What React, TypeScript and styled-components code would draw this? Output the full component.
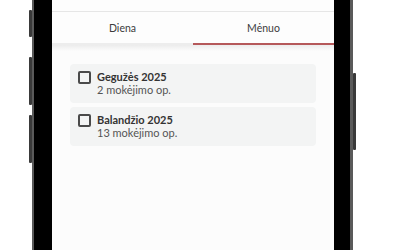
import styled, { createGlobalStyle } from 'styled-components';

const GlobalStyle = createGlobalStyle`
  html, body {
    margin: 0;
    padding: 0;
    background: #ffffff;
    font-family: Lato, 'Liberation Sans', sans-serif;
  }
`;

const months = [
  { title: 'Gegužės 2025', count: '2 mokėjimo op.' },
  { title: 'Balandžio 2025', count: '13 mokėjimo op.' },
];

export default function App() {
  return (
    <Page>
      <GlobalStyle />
      <Phone>
        <SideButton side="left" top={10} height={27} />
        <SideButton side="left" top={57} height={48} />
        <SideButton side="left" top={115} height={48} />
        <SideButton side="right" top={73} height={77} />
        <Screen>
          <TopBar />
          <Tabs>
            <Tab>Diena</Tab>
            <Tab active>Mėnuo</Tab>
          </Tabs>
          <Shadow />
          <List>
            {months.map((m) => (
              <Card key={m.title}>
                <Checkbox />
                <CardText>
                  <Title>{m.title}</Title>
                  <Sub>{m.count}</Sub>
                </CardText>
              </Card>
            ))}
          </List>
        </Screen>
      </Phone>
    </Page>
  );
}

const Page = styled.div`
  width: 400px;
  height: 250px;
  overflow: hidden;
  padding-left: 32px;
  box-sizing: border-box;
`;

const Phone = styled.div`
  position: relative;
  width: 321px;
  height: 250px;
  box-sizing: border-box;
  background: #000;
  border-left: 2px solid #5a5a5a;
  border-right: 3px solid #5a5a5a;
  padding: 0 16px 0 18px;
`;

const SideButton = styled.div<{ side: 'left' | 'right'; top: number; height: number }>`
  position: absolute;
  top: ${(p) => p.top}px;
  height: ${(p) => p.height}px;
  width: 3px;
  background: #3a3a3a;
  border-radius: 1px;
  ${(p) => (p.side === 'left' ? 'left: -5px;' : 'right: -6px;')}
`;

const Screen = styled.div`
  height: 100%;
  background: #fcfcfc;
  display: flex;
  flex-direction: column;
`;

const TopBar = styled.div`
  height: 11px;
  background: #fdfdfd;
  border-bottom: 1px solid #e6e6e6;
`;

const Tabs = styled.div`
  display: flex;
  height: 33px;
  background: #fdfdfd;
`;

const Tab = styled.div<{ active?: boolean }>`
  flex: 1;
  display: flex;
  align-items: center;
  justify-content: center;
  font-size: 10.5px;
  color: #3c3c3c;
  box-sizing: border-box;
  padding-top: 1px;
  border-bottom: 2px solid ${(p) => (p.active ? '#b5585a' : '#ededed')};
`;

const Shadow = styled.div`
  height: 6px;
  background: linear-gradient(#ececec, #fcfcfc);
`;

const List = styled.div`
  display: flex;
  flex-direction: column;
  gap: 4px;
  padding: 13px 18px 0;
`;

const Card = styled.div`
  display: flex;
  align-items: flex-start;
  gap: 6px;
  height: 39px;
  box-sizing: border-box;
  padding: 6px 8px;
  background: #f3f4f4;
  border-radius: 4px;
`;

const Checkbox = styled.div`
  width: 13px;
  height: 13px;
  box-sizing: border-box;
  border: 2px solid #4a4a4a;
  border-radius: 2px;
  flex-shrink: 0;
  margin-top: 1px;
`;

const CardText = styled.div`
  display: flex;
  flex-direction: column;
`;

const Title = styled.div`
  font-size: 11px;
  font-weight: 700;
  color: #333;
  line-height: 13px;
`;

const Sub = styled.div`
  font-size: 11px;
  color: #555;
  line-height: 14px;
`;
